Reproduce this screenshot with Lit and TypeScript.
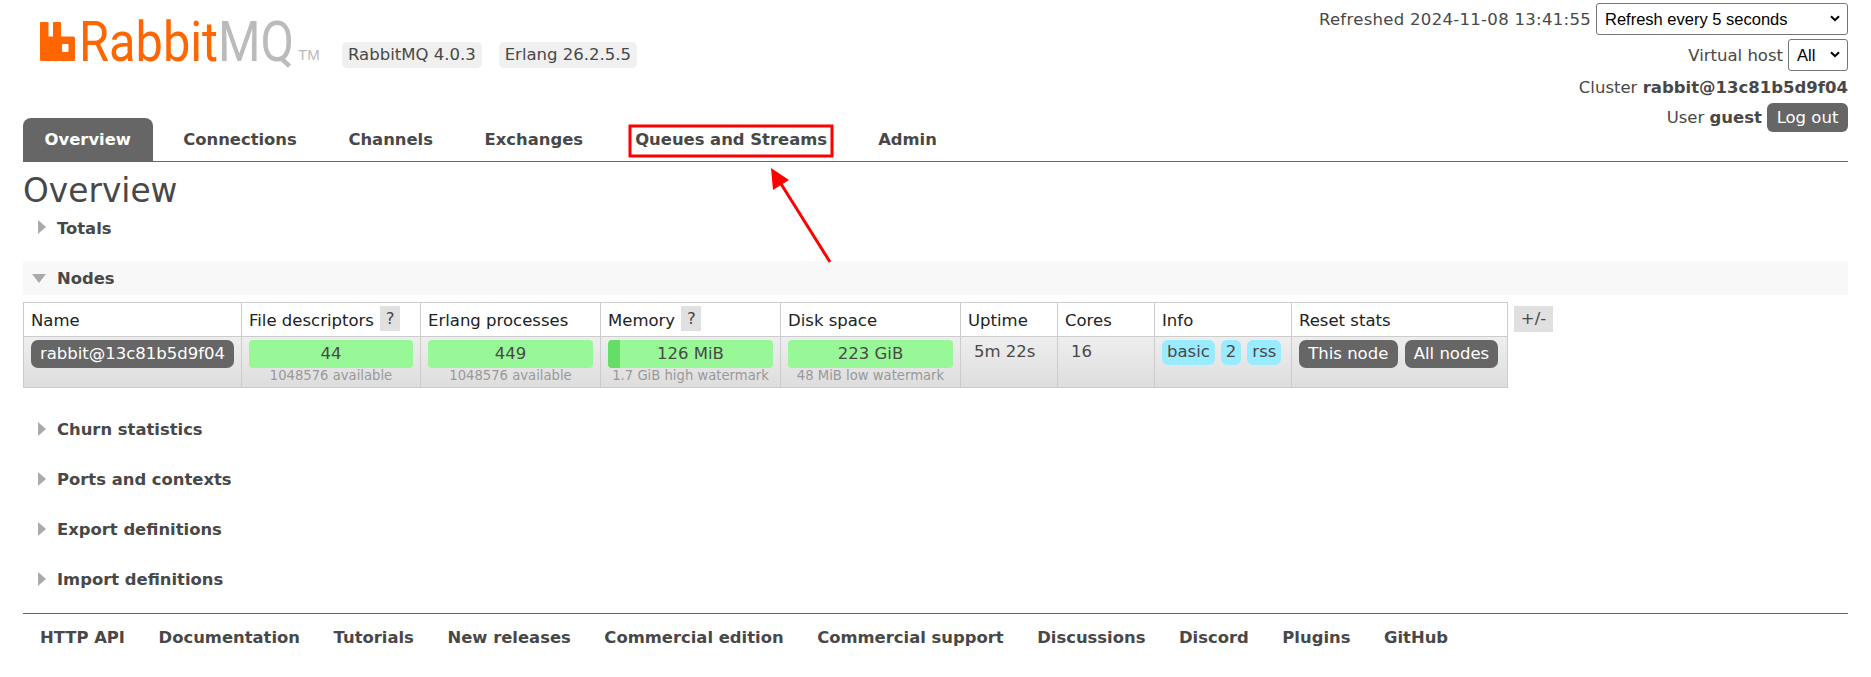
import { LitElement, html, css } from "lit";
import { customElement } from "lit/decorators.js";

@customElement("app-root")
export class AppRoot extends LitElement {
  static styles = css`
    :host { display: block; position: relative; width: 1871px; height: 677px; overflow: hidden; background: #fff;
      font: 16.5px "DejaVu Sans", Verdana, sans-serif; color: #484848; }
    * { box-sizing: border-box; }
    .page { padding: 0 23px; }
    .head { display: flex; justify-content: space-between; height: 162px; border-bottom: 1px solid #666; }
    .brand { height: 118px; display: flex; align-items: flex-start; padding: 22px 0 0 17px; }
    .logo { display: flex; align-items: flex-start; width: 302px; height: 40px; }
    .logo svg { flex: none; width: 35px; height: 39px; margin-right: 4px; }
    .wordmark { font: 400 56px/40px Roboto, sans-serif; color: #f60; white-space: nowrap; display: block; width: 219px; transform: scaleX(0.87); transform-origin: 0 50%; }
    .wordmark b { font-weight: 400; color: #bbb; }
    .tm { font: 15px/14px "Liberation Sans", sans-serif; color: #bbb; margin: 26px 0 0 0; }
    .badge { background: #f0f0f0; border-radius: 5px; height: 26px; line-height: 26px; padding: 0 6px; margin-top: 20px; white-space: nowrap; }
    .badge + .badge { margin-left: 17px; }
    .tabs { display: flex; height: 43px; }
    .tab { font-weight: bold; font-size: 16.400px; line-height: 43px; padding: 0 21px; margin-right: 9.600px; border-radius: 8px 8px 0 0; white-space: nowrap; }
    .tab.on { background: #666; color: #fff; padding: 0 21.600px; }
    .tab.mark-tab { padding: 0 20.500px 0 21.500px; }
    .menu { display: flex; flex-direction: column; align-items: flex-end; }
    .row { display: flex; align-items: center; justify-content: flex-end; white-space: nowrap; gap: 5px; }
    .r1 { height: 36px; margin-top: 1px; }
    .stamp { letter-spacing: 0.3px; }
    .r2 { height: 36px; }
    .r3 { height: 29px; }
    .r4 { height: 31px; }
    .pick { position: relative; display: block; height: 32px; }
    .pick svg { position: absolute; right: 8px; top: 12px; width: 10px; height: 7px; pointer-events: none; }
    select { appearance: none; font: 16.5px "Liberation Sans", Arial, sans-serif; color: #000; background: #fff; border: 1px solid #767676; border-radius: 3px; height: 32px; display: block; }
    .s1 { width: 252px; padding-left: 8px; }
    .s2 { width: 60px; padding-left: 8px; }
    .logout { background: #666; color: #fff; border-radius: 6px; height: 29px; line-height: 29px; padding: 0 8px; width: 81px; text-align: center; }
    h1 { font-size: 32.800px; font-weight: normal; margin: 0; height: 49px; line-height: 58px; }
    .sec { font-weight: bold; font-size: 16.400px; display: flex; align-items: center; height: 34px; }
    .sec i { display: block; flex: none; }
    .closed i { width: 0; height: 0; border-style: solid; border-width: 7.500px 0 7.500px 8px; border-color: transparent transparent transparent #aaa; margin: -2px 11px 0 15px; }
    .open { background: #f8f8f8; }
    .open i { width: 0; height: 0; border-style: solid; border-width: 9px 7.500px 0 7.500px; border-color: #aaa transparent transparent transparent; margin: 0 11px 0 9px; }
    .s-nodes { margin-top: 16px; }
    .nodes { display: flex; align-items: flex-start; margin-top: 7px; }
    table { border-collapse: collapse; table-layout: fixed; width: 1484px; }
    th, td { border: 1px solid #ccc; padding: 0; text-align: left; vertical-align: top; }
    th { font-weight: normal; color: #222; height: 33px; padding: 2px 7px 0; line-height: 31px; background: #fff; white-space: nowrap; }
    tbody tr { background: linear-gradient(#eee, #ddd); }
    td { height: 50px; padding: 3px 7px; white-space: nowrap; }
    .help { display: inline-block; background: #e0e0e0; height: 25px; line-height: 25px; width: 20px; text-align: center; margin-left: 1px; vertical-align: top; margin-top: 1px; color: #444; }
    .pill { background: #666; color: #fff; border-radius: 7px; height: 28px; line-height: 28px; text-align: center; }
    .bar { background: #98f898; border-radius: 4px; height: 28px; line-height: 28px; text-align: center; position: relative; overflow: hidden; }
    .bar.mem { background: linear-gradient(to right, #66dd66 12px, #98f898 12px); }
    .sub { font-size: 13.200px; line-height: 16px; color: #999; text-align: center; }
    .plain { line-height: 24px; padding-left: 6px; }
    .tags { display: flex; gap: 6px; }
    .tag { background: #99ebff; border-radius: 6px; height: 25px; line-height: 24px; padding: 0 5px; }
    .btns { display: flex; gap: 7px; }
    .btns .pill { padding: 0 9.200px; }
    .plus { background: #e0e0e0; width: 39px; height: 26px; line-height: 26px; text-align: center; margin: 4px 0 0 6px; }
    .s-churn { margin-top: 24.500px; }
    .s-next { margin-top: 16px; }
    .foot { border-top: 1px solid #666; margin-top: 16px; display: flex; gap: 33.600px; padding: 14px 0 0 17px; font-weight: bold; font-size: 16.400px; white-space: nowrap; }
    .mark { position: absolute; left: 0; top: 0; pointer-events: none; }
  `;

  private sec(label: string, cls: string) {
    return html`<div class="sec closed ${cls}"><i></i>${label}</div>`;
  }

  private chev() {
    return html`<svg viewBox="0 0 10 7"><path d="M1 1.200l4 4 4-4" fill="none" stroke="#000" stroke-width="2"/></svg>`;
  }

  render() {
    const foot = ["HTTP API", "Documentation", "Tutorials", "New releases", "Commercial edition", "Commercial support", "Discussions", "Discord", "Plugins", "GitHub"];
    return html`
      <div class="page">
        <header class="head">
          <div>
            <div class="brand">
              <div class="logo">
                <svg viewBox="0 0 35 39"><path fill="#f60" fill-rule="evenodd" d="M1 0h6.500a1 1 0 0 1 1 1v13.500h4.500V1a1 1 0 0 1 1-1h6a1 1 0 0 1 1 1v13.500h12.500a1.500 1.500 0 0 1 1.500 1.500v21.500a1.500 1.500 0 0 1-1.500 1.500H1.500A1.500 1.500 0 0 1 0 37.500V1a1 1 0 0 1 1-1zM22 23v6a1 1 0 0 0 1 1h4.500a1 1 0 0 0 1-1v-6a1 1 0 0 0-1-1H23a1 1 0 0 0-1 1z"/></svg>
                <span class="wordmark">Rabbit<b>MQ</b></span>
                <span class="tm">TM</span>
              </div>
              <span class="badge">RabbitMQ 4.0.3</span>
              <span class="badge">Erlang 26.2.5.5</span>
            </div>
            <nav class="tabs">
              <span class="tab on">Overview</span>
              <span class="tab">Connections</span>
              <span class="tab">Channels</span>
              <span class="tab">Exchanges</span>
              <span class="tab mark-tab">Queues and Streams</span>
              <span class="tab">Admin</span>
            </nav>
          </div>
          <div class="menu">
            <div class="row r1"><span class="stamp">Refreshed 2024-11-08 13:41:55</span><span class="pick"><select class="s1"><option>Refresh every 5 seconds</option></select>${this.chev()}</span></div>
            <div class="row r2">Virtual host <span class="pick"><select class="s2"><option>All</option></select>${this.chev()}</span></div>
            <div class="row r3"><span>Cluster <b>rabbit@13c81b5d9f04</b></span></div>
            <div class="row r4"><span>User <b>guest</b></span><span class="logout">Log out</span></div>
          </div>
        </header>
        <h1>Overview</h1>
        ${this.sec("Totals", "")}
        <div class="sec open s-nodes"><i></i>Nodes</div>
        <div class="nodes">
          <table>
            <colgroup>
              <col style="width:218px"><col style="width:179px"><col style="width:180px"><col style="width:180px"><col style="width:180px"><col style="width:97px"><col style="width:97px"><col style="width:137px"><col style="width:216px">
            </colgroup>
            <thead><tr>
              <th>Name</th><th>File descriptors <span class="help">?</span></th><th>Erlang processes</th><th>Memory <span class="help">?</span></th><th>Disk space</th><th>Uptime</th><th>Cores</th><th>Info</th><th>Reset stats</th>
            </tr></thead>
            <tbody><tr>
              <td><div class="pill">rabbit@13c81b5d9f04</div></td>
              <td><div class="bar">44</div><div class="sub">1048576 available</div></td>
              <td><div class="bar">449</div><div class="sub">1048576 available</div></td>
              <td><div class="bar mem">126 MiB</div><div class="sub">1.7 GiB high watermark</div></td>
              <td><div class="bar">223 GiB</div><div class="sub">48 MiB low watermark</div></td>
              <td><div class="plain">5m 22s</div></td>
              <td><div class="plain">16</div></td>
              <td><div class="tags"><span class="tag">basic</span><span class="tag">2</span><span class="tag">rss</span></div></td>
              <td><div class="btns"><span class="pill">This node</span><span class="pill">All nodes</span></div></td>
            </tr></tbody>
          </table>
          <span class="plus">+/-</span>
        </div>
        ${this.sec("Churn statistics", "s-churn")}
        ${this.sec("Ports and contexts", "s-next")}
        ${this.sec("Export definitions", "s-next")}
        ${this.sec("Import definitions", "s-next")}
        <footer class="foot">${foot.map((f) => html`<span>${f}</span>`)}</footer>
      </div>
      <svg class="mark" width="1871" height="677" viewBox="0 0 1871 677">
        <rect x="630" y="126" width="202" height="30" fill="none" stroke="#f00" stroke-width="3"/>
        <path d="M830 262 L778 179" stroke="#f00" stroke-width="3" fill="none"/>
        <path d="M771 168 L789 180 L773 190 Z" fill="#f00"/>
      </svg>
    `;
  }
}
